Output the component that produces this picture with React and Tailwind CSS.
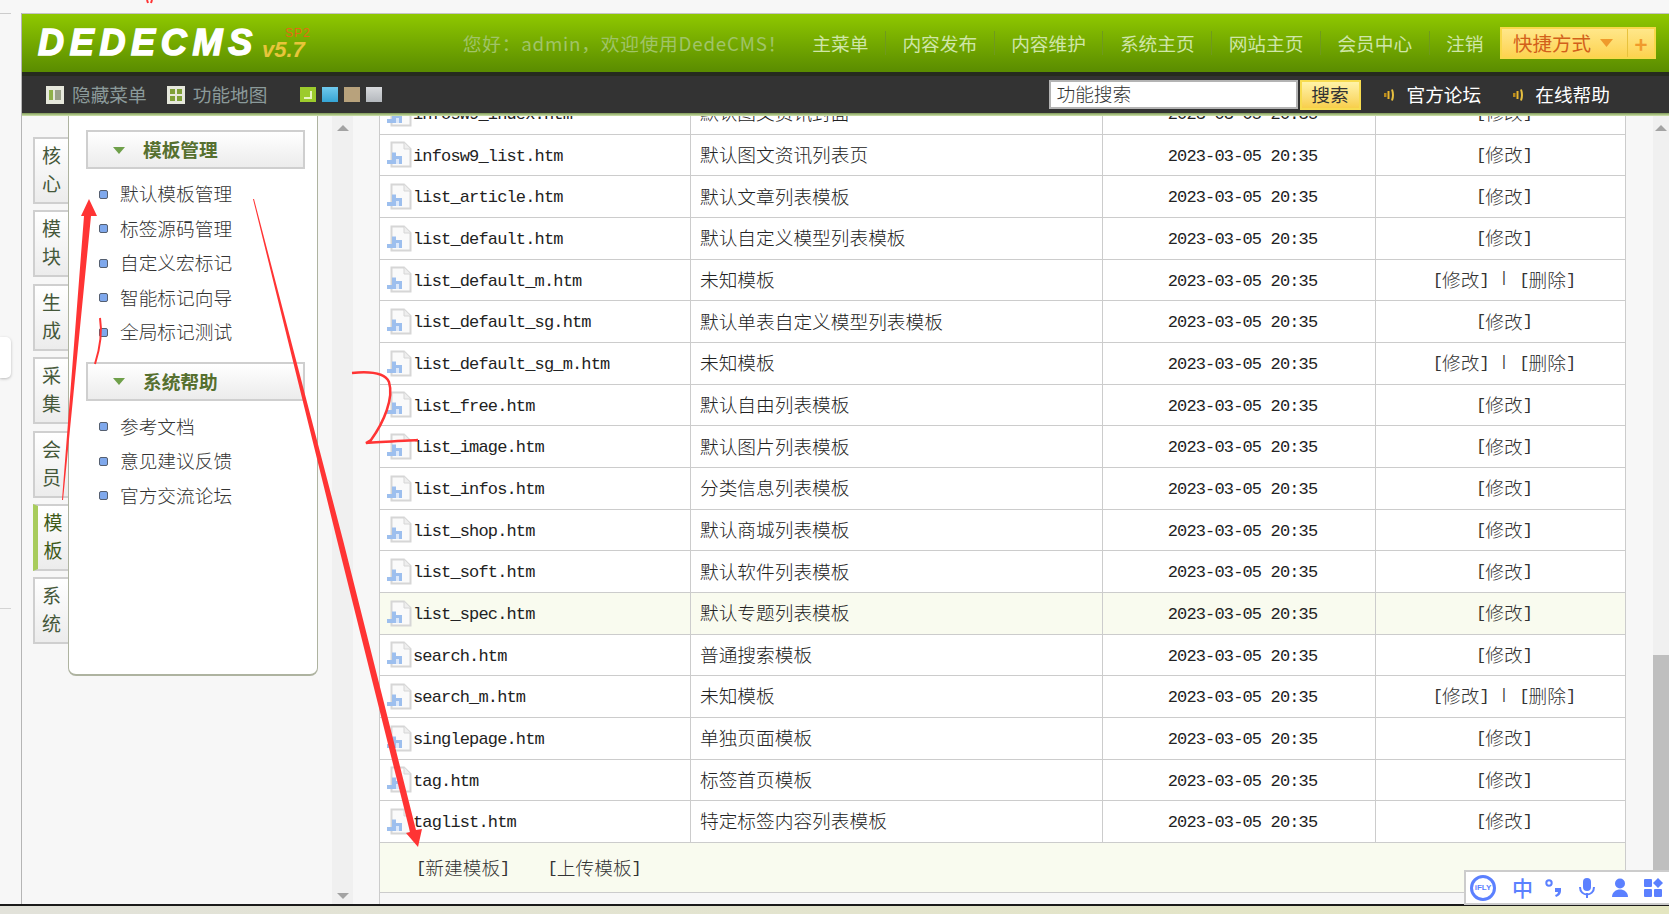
const cjk = "font-['Noto_Sans_CJK_SC',sans-serif]";
const mono = "font-['Liberation_Mono',monospace] text-[17px] tracking-[-0.85px]";

const rows = [
  ["infosw9_index.htm", "默认图文资讯封面"],
  ["infosw9_list.htm", "默认图文资讯列表页"],
  ["list_article.htm", "默认文章列表模板"],
  ["list_default.htm", "默认自定义模型列表模板"],
  ["list_default_m.htm", "未知模板", true],
  ["list_default_sg.htm", "默认单表自定义模型列表模板"],
  ["list_default_sg_m.htm", "未知模板", true],
  ["list_free.htm", "默认自由列表模板"],
  ["list_image.htm", "默认图片列表模板"],
  ["list_infos.htm", "分类信息列表模板"],
  ["list_shop.htm", "默认商城列表模板"],
  ["list_soft.htm", "默认软件列表模板"],
  ["list_spec.htm", "默认专题列表模板"],
  ["search.htm", "普通搜索模板"],
  ["search_m.htm", "未知模板", true],
  ["singlepage.htm", "单独页面模板"],
  ["tag.htm", "标签首页模板"],
  ["taglist.htm", "特定标签内容列表模板"],
];

const tabs = ["核心", "模块", "生成", "采集", "会员", "模板", "系统"];
const nav = ["主菜单", "内容发布", "内容维护", "系统主页", "网站主页", "会员中心", "注销"];

function FileIcon() {
  return (
    <svg width="25" height="27" viewBox="0 0 25 27" className="shrink-0">
      <path d="M4.5 1.5H17L23.5 8V25.5H4.5Z" fill="#fafafa" stroke="#d6d6d6" strokeWidth="2" />
      <path d="M17 1.5V8H23.5" fill="#eeeeee" stroke="#d6d6d6" />
      <path d="M0 23V19H5V11.5H9V15H15V23Z" fill="#9dbfee" />
      <rect x="9" y="18" width="3" height="5" fill="#dce8fa" />
    </svg>
  );
}

function Speaker() {
  return (
    <svg width="14" height="16" viewBox="0 0 14 16">
      <rect x="1" y="6" width="2.5" height="4" fill="#b98a1c" />
      <path d="M5.5 4V12" stroke="#e8b52c" strokeWidth="2" />
      <path d="M9 2.5Q11 8 9 13.5" stroke="#e8c040" strokeWidth="2" fill="none" />
    </svg>
  );
}

function Edit({ label }) {
  return (
    <span className="inline-flex items-center">
      <span className={mono + " pt-[3px]"}>[</span>
      {label}
      <span className={mono + " pt-[3px]"}>]</span>
    </span>
  );
}

function Row({ file, desc, del, active }) {
  return (
    <div className={"flex h-[41.67px] shrink-0 border-b border-[#cccccc] text-[18.7px] text-[#222] " + cjk + (active ? " bg-[#f9fbef]" : " bg-white")}>
      <div className="flex w-[311px] shrink-0 items-center border-r border-[#cccccc] pl-[7px]">
        <FileIcon />
        <span className={mono + " ml-[1px] pt-[3px] whitespace-nowrap"}>{file}</span>
      </div>
      <div className="flex w-[412px] shrink-0 items-center border-r border-[#cccccc] pb-[2px] pl-[9px] whitespace-nowrap font-light">{desc}</div>
      <div className={"flex w-[273px] shrink-0 items-center justify-center border-r border-[#cccccc] pt-[3px] pl-[7px] " + mono}>2023-03-05 20:35</div>
      <div className="flex flex-1 items-center justify-center pb-[2px] pl-[7px] font-light text-[#333]">
        <Edit label="修改" />
        {del && <span className="mx-[11px] font-['Liberation_Mono',monospace] text-[14px]">|</span>}
        {del && <Edit label="删除" />}
      </div>
    </div>
  );
}

function MenuHeader({ title }) {
  return (
    <div className="mr-[12px] ml-[17px] flex h-[39px] items-center border-2 border-[#cfcfcf] bg-linear-to-b from-white to-[#ececec] pl-[25px]">
      <svg width="12" height="8" viewBox="0 0 12 8"><path d="M0 1H12L6 8Z" fill="#6fa04a" /></svg>
      <span className={"ml-[18px] text-[18.7px] font-bold text-[#56702f] " + cjk}>{title}</span>
    </div>
  );
}

function MenuItem({ label }) {
  return (
    <div className={"flex h-[34.5px] items-center pl-[30px] text-[18.7px] font-light text-[#333] " + cjk}>
      <span className="mt-[2px] h-[9px] w-[9px] rounded-[2px] border border-[#555f70] bg-[#7fa8ec]" />
      <span className="ml-[12px]">{label}</span>
    </div>
  );
}

function Scrollbar({ thumb }) {
  return (
    <div className="relative flex h-full w-full flex-col items-center justify-between bg-[#f0f0f0] pt-[9px] pb-[5px]">
      {thumb && <div className="absolute right-0 bottom-0 left-0 h-[249px] bg-[#bfbfbf]" />}
      <svg width="12" height="6" viewBox="0 0 12 6" className="relative"><path d="M6 0L12 6H0Z" fill="#a3a3a3" /></svg>
      {!thumb && <svg width="12" height="6" viewBox="0 0 12 6"><path d="M0 0H12L6 6Z" fill="#a3a3a3" /></svg>}
    </div>
  );
}

function Iflybar() {
  return (
    <div className="absolute top-[870px] left-[1464px] flex h-[35px] w-[205px] items-center border-2 border-r-0 border-[#cccccc] bg-white pl-[4px] text-[#5b80ff]">
      <div className="flex h-[26px] w-[26px] items-center justify-center rounded-full border-[3px] border-[#5b80ff] text-[8px] font-bold font-['Liberation_Sans',sans-serif]">iFLY</div>
      <span className={"ml-[10px] w-[33px] text-center text-[21px] leading-none font-medium " + cjk}>中</span>
      <svg width="18" height="18" viewBox="0 0 18 18" className="ml-[6px]">
        <circle cx="4" cy="4" r="2.7" fill="none" stroke="#5b80ff" strokeWidth="2" />
        <path d="M10 9H16V12C16 15 14 17 11 18L10 16C12 15.5 13 14 13 13H10Z" fill="#5b80ff" />
      </svg>
      <svg width="18" height="22" viewBox="0 0 18 22" className="ml-[15px]">
        <rect x="5" y="1" width="8" height="13" rx="4" fill="#5b80ff" />
        <path d="M2 10C2 20 16 20 16 10" fill="none" stroke="#5b80ff" strokeWidth="2" />
        <rect x="8" y="16" width="2" height="5" fill="#5b80ff" />
      </svg>
      <svg width="18" height="20" viewBox="0 0 18 20" className="ml-[15px]">
        <circle cx="9" cy="5.5" r="5" fill="#5b80ff" />
        <path d="M1 19C1 9 17 9 17 19Z" fill="#5b80ff" />
      </svg>
      <svg width="20" height="20" viewBox="0 0 20 20" className="ml-[14px]">
        <rect x="1" y="1" width="8" height="8" rx="1" fill="#5b80ff" />
        <rect x="1" y="11" width="8" height="8" rx="1" fill="#5b80ff" />
        <rect x="11" y="11" width="8" height="8" rx="1" fill="#5b80ff" />
        <path d="M15 0L20 5L15 10L10 5Z" fill="#5b80ff" />
      </svg>
    </div>
  );
}

function Annotations() {
  return (
    <svg width="1669" height="914" className="pointer-events-none absolute top-0 left-0">
      <path d="M147 0L148 3M152 0L151 3" stroke="#f33" strokeWidth="2" />
      <path d="M89 199L97 216L91 216L63 500L62 500L84 216L81 216Z" fill="#ff3434" />
      <path d="M100 318C102 330 101 345 95 364" fill="none" stroke="#ff3434" strokeWidth="2" />
      <path d="M253 199L254 199L343 540L416 830L422 829L418 847L406 833L410 832L337 540Z" fill="#ff3434" />
      <path d="M352 373C362 372 384 371 389 382C394 398 384 422 371 440L366 443C380 442 400 441 418 440" fill="none" stroke="#ff3434" strokeWidth="2.5" />
    </svg>
  );
}

export default function App() {
  return (
    <div className={"relative flex h-[914px] w-[1669px] flex-col overflow-hidden bg-[#f7f7f7] " + cjk}>
      <div className="h-[13px] shrink-0" />

      <div className="flex min-h-0 flex-1">
        <div className="flex w-[22px] shrink-0 flex-col border-r border-[#b5b5b5]">
          <div className="h-px w-[11px] bg-[#cccccc]" />
        </div>

        <div className="flex min-w-0 flex-1 flex-col">
          {/* HEADER */}
          <div className="flex h-[59px] shrink-0 items-center border-t border-[#c4c4c4] bg-linear-to-b from-[#8fc800] to-[#5a8c00] pr-[13px]">
            <div className="relative ml-[16px] flex shrink-0 items-end">
              <span className="text-[36px] leading-none font-black tracking-[5.7px] text-white italic [-webkit-text-stroke:1.5px_white] font-['Liberation_Sans',sans-serif]">DEDECMS</span>
              <span className="ml-[4px] text-[22px] leading-none font-bold text-[#e8c53a] italic font-['Liberation_Sans',sans-serif]">v5.7</span>
              <span className="absolute top-[-1px] right-[-6px] text-[12px] tracking-[1px] text-[#e56a12] font-['Liberation_Sans',sans-serif]">SP2</span>
            </div>
            <span className="ml-[158px] shrink-0 text-[18.7px] tracking-[0.8px] whitespace-nowrap text-[#a0c468]">您好：admin，欢迎使用DedeCMS！</span>
            <div className="ml-auto flex shrink-0 items-center">
              {nav.map((n, i) => (
                <span key={n} className={"flex h-[24px] items-center px-[16.5px] text-[18.7px] whitespace-nowrap text-[#cfe6a8] " + (i < nav.length - 1 ? "border-r border-[#6f9a1e]" : "")}>{n}</span>
              ))}
            </div>
            <div className="flex h-[32px] w-[156px] shrink-0 items-center border-2 border-[#f8d84a] bg-linear-to-b from-[#ffe789] to-[#fdd34f] text-[#d2601a]">
              <span className="ml-[11px] text-[19.5px] leading-none whitespace-nowrap">快捷方式</span>
              <svg width="13" height="8" viewBox="0 0 13 8" className="ml-[9px]"><path d="M0 0H13L6.5 8Z" fill="#ef9a2c" /></svg>
              <div className="ml-auto flex h-full w-[27px] items-center justify-center border-l border-[#e8c23c] text-[22px] leading-none font-bold text-[#f09a2c]">+</div>
            </div>
          </div>

          {/* TOOLBAR */}
          <div className="flex h-[41px] shrink-0 items-center border-t-[4px] border-[#262b1f] bg-[#333333]">
            <svg width="18" height="18" viewBox="0 0 18 18" className="ml-[24px]">
              <rect width="18" height="18" fill="#e6e8dc" />
              <rect x="3" y="4" width="4" height="10" fill="#8fb04a" />
              <rect x="9" y="4" width="6" height="10" fill="#9aa08a" />
            </svg>
            <span className="ml-[8px] text-[18.7px] whitespace-nowrap text-[#8b9a9a]">隐藏菜单</span>
            <svg width="18" height="18" viewBox="0 0 18 18" className="ml-[20px]">
              <rect width="18" height="18" fill="#e6e8dc" />
              <rect x="3" y="3" width="5" height="5" fill="#7fa038" />
              <rect x="10" y="3" width="5" height="5" fill="#7fa038" />
              <rect x="3" y="10" width="5" height="5" fill="#7fa038" />
              <rect x="10" y="10" width="5" height="5" fill="#7fa038" />
            </svg>
            <span className="ml-[8px] text-[18.7px] whitespace-nowrap text-[#8b9a9a]">功能地图</span>
            <div className="ml-[32px] flex gap-[6px]">
              <div className="flex h-[15px] w-[16px] items-center justify-center bg-[#9ccb2c]"><div className="h-[8px] w-[8px] border-r-2 border-b-2 border-[#e8f4c0]" /></div>
              <div className="h-[15px] w-[16px] bg-linear-to-b from-[#6fc9ee] to-[#34a4d4]" />
              <div className="h-[15px] w-[16px] bg-[#b8a27c]" />
              <div className="h-[15px] w-[16px] bg-linear-to-b from-[#d8dadd] to-[#b4b8bd]" />
            </div>
            <div className="ml-auto flex h-[29px] w-[249px] items-center border-2 border-[#b4b4b4] bg-white pb-[2px] pl-[6px] text-[18.7px] font-light text-[#333]">功能搜索</div>
            <div className="ml-[2px] flex h-[30px] w-[61px] items-center justify-center border-2 border-[#f7dc50] bg-linear-to-b from-[#fff3a8] to-[#f8cf4a] text-[18.7px] text-[#333]">搜索</div>
            <span className="ml-[22px]"><Speaker /></span>
            <span className="ml-[10px] text-[18.7px] whitespace-nowrap text-white">官方论坛</span>
            <span className="ml-[31px]"><Speaker /></span>
            <span className="mr-[59px] ml-[9px] text-[18.7px] whitespace-nowrap text-white">在线帮助</span>
          </div>
          <div className="h-[3px] shrink-0 bg-linear-to-b from-[#7f9a58] to-[#cfe3ab]" />

          {/* BODY */}
          <div className="flex min-h-0 flex-1">
            <div className="flex w-[46px] shrink-0 flex-col gap-[6.4px] pt-[21px] pl-[11px]">
              {tabs.map((t) => {
                const on = t === "模板";
                return (
                  <div key={t} className={"flex h-[67px] flex-col items-center justify-center border-2 border-r-0 border-[#cfcfcf] bg-linear-to-b from-white to-[#ececec] pb-[3px] text-[19px] leading-[28px] " + (on ? "border-l-[5px] border-l-[#a8cc5c] text-[#3f5a18]" : "text-[#45583a]")}>
                    <span>{t[0]}</span>
                    <span>{t[1]}</span>
                  </div>
                );
              })}
            </div>

            <div className="h-[560px] w-[250px] shrink-0 rounded-b-[8px] border-x border-b-2 border-[#aeb3a0] bg-white pt-[14px]">
              <MenuHeader title="模板管理" />
              <div className="pt-[7px] pb-[13px]">
                {["默认模板管理", "标签源码管理", "自定义宏标记", "智能标记向导", "全局标记测试"].map((m) => <MenuItem key={m} label={m} />)}
              </div>
              <MenuHeader title="系统帮助" />
              <div className="pt-[8px]">
                {["参考文档", "意见建议反馈", "官方交流论坛"].map((m) => <MenuItem key={m} label={m} />)}
              </div>
            </div>

            <div className="ml-[14px] w-[21px] shrink-0"><Scrollbar /></div>

            <div className="ml-[26px] min-h-0 w-[1247px] shrink-0 overflow-hidden border-l border-[#cccccc]">
              <div className="mt-[-23px] flex flex-col border-r border-[#cccccc]">
                {rows.map((r) => <Row key={r[0]} file={r[0]} desc={r[1]} del={r[2]} active={r[0] === "list_spec.htm"} />)}
                <div className="flex h-[50px] shrink-0 items-center border-b border-[#cccccc] bg-[#f9fbef] pl-[36px] text-[18.7px] font-light text-[#333]">
                  <Edit label="新建模板" />
                  <div className="ml-[38px] flex"><Edit label="上传模板" /></div>
                </div>
              </div>
            </div>

            <div className="ml-auto w-[16px] shrink-0"><Scrollbar thumb /></div>
          </div>
        </div>
      </div>

      <div className="h-[10px] shrink-0 border-t-2 border-[#1a1a1a] bg-linear-to-r from-[#e2e2da] to-[#e4e6c0]" />

      <div className="absolute top-[337px] left-0 h-[41px] w-[11px] rounded-r-[5px] bg-white shadow-[0_1px_3px_rgba(0,0,0,0.25)]" />
      <div className="absolute top-[608px] left-0 h-px w-[11px] bg-[#d4d4d4]" />
      <Iflybar />
      <Annotations />
    </div>
  );
}
